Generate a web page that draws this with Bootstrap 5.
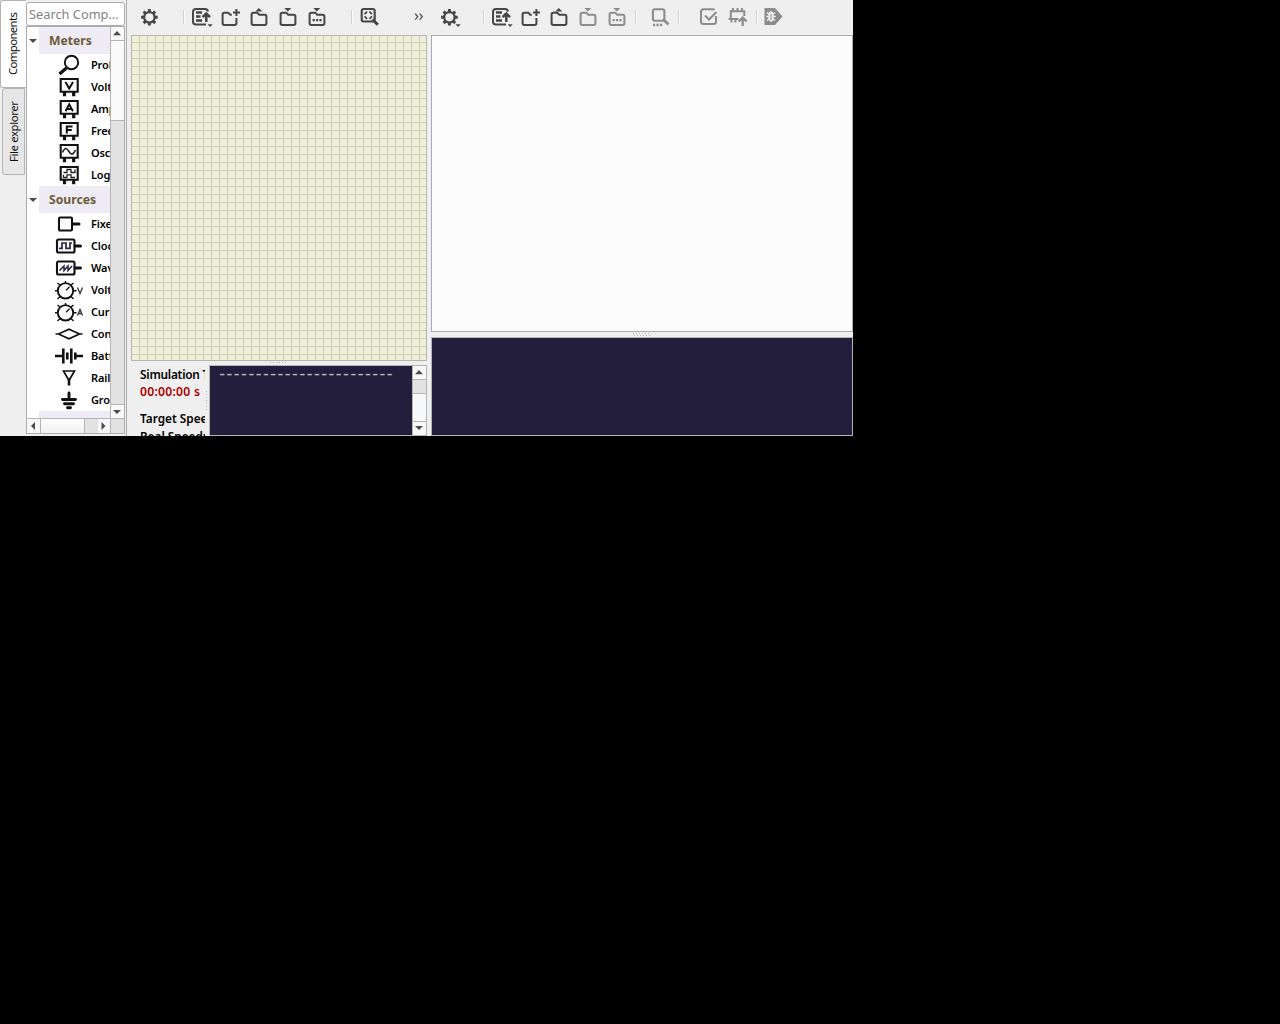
<!DOCTYPE html>
<html lang="en">
<head>
<meta charset="utf-8">
<title>SimulIDE</title>
<link rel="stylesheet" href="https://cdn.jsdelivr.net/npm/bootstrap@5.3.0/dist/css/bootstrap.min.css">
<style>
body{background:#000;font-family:"Noto Sans",sans-serif;font-size:11px;line-height:1.2;color:#111;overflow:hidden}
svg{display:block;flex:none}
.app-window{width:853px;height:436px;background:#efefef}
.side{width:127px;border-right:1px solid #acacac}
.tab-strip{width:26px}
.vtab{writing-mode:vertical-rl;transform:rotate(180deg);font-size:11.4px;white-space:nowrap;border:1px solid #b4b4b4}
.vtab-on{height:88px;width:26px;background:#fff;border-left:0;border-radius:0 3px 3px 0;letter-spacing:-.65px;padding-left:1px}
.vtab-off{height:87px;width:23px;margin-left:2px;background:#e6e6e6;border-radius:0 3px 3px 0;letter-spacing:-.4px}
.side-body{width:99px;padding-top:2px}
.search-box{height:24px;border:1px solid #acacac;border-radius:3px;background:#fff;color:#838383;font-size:12.8px;padding:1px 2px 0}
.tree-frame{height:408px;border:1px solid #acacac;background:#fff}
.tree-main{height:391px}
.tree-list{width:83px}
.group-row{height:27px}
.group-arrow{width:12px}
.group-name{background:#efebf5;color:#6b5b3c;font-weight:700;font-size:12.2px;padding:2px 0 0 10px}
.part-row{height:22px;padding-left:27px;font-weight:600;gap:7px;white-space:nowrap;color:#000;letter-spacing:-.15px}
.track{background:#e2e2e2;border-left:1px solid #b4b4b4;width:14px}
.sb-btn{height:13px;background:#f8f8f8}
.thumb-v{height:81px;background:#fafafa;border:solid #b4b4b4;border-width:1px 0}
.thumb-s{background:#e2e2e2;height:15px;border:solid #b4b4b4;border-width:1px 0}
.sb-end{border-top:1px solid #b4b4b4;height:14px}
.hbar{height:15px;border-top:1px solid #b4b4b4;background:#e2e2e2}
.hb-l{width:13px;background:#f8f8f8}
.hb-t{width:45px;background:linear-gradient(#fff,#f0f0f0);border:solid #b4b4b4;border-width:0 1px}
.circuit-side{width:300px;padding-left:4px}
.tool-bar{height:35px;padding-top:5px;color:#464646}
.tb-left{padding-left:4px}
.tb-right{padding-left:4px}
.tb-sep{width:2px;height:14px;margin-top:5px;border-left:1px solid #d2d2d2;background:#fafafa}
.dim{color:#8c8c8c}
.sp19{margin-left:19px}
.ml3{margin-left:3px}
.more-btn{font-size:16px;line-height:20px;margin-left:30px;letter-spacing:-.5px}
.grid-sheet{height:326px;width:296px;border:1px solid #b4b4b4;background-color:#f0f0d8;
background-image:linear-gradient(90deg,#cfd0b9 1px,transparent 1px),linear-gradient(#cfd0b9 1px,transparent 1px);background-size:8px 8px;background-position:7px 0,0 6px}
.grip-h{height:4px}
.info-pane{height:71px;width:296px}
.sim-info{width:74px;padding-left:9px;font-weight:600;font-size:11.8px;white-space:nowrap;line-height:18px;color:#000}
.sim-title{letter-spacing:-.22px}
.sim-time{color:#a00;font-size:12.2px;letter-spacing:.25px}
.sim-speed{margin-top:8px}
.grip-v{width:4px}
.console{background:#231e3b;border:1px solid #b4b4b4}
.out-text{font-family:"DejaVu Sans Mono",monospace;font-size:17px;letter-spacing:-2.95px;color:#b9b8b6;padding-left:7px;line-height:14px}
.editor-side{width:422px;margin-left:4px}
.edit-area{height:297px;background:#fbfbfb;border:1px solid #acacac}
.console-out{height:99px;margin-top:1px}
</style>
<script src="https://cdn.jsdelivr.net/npm/bootstrap@5.3.0/dist/js/bootstrap.bundle.min.js"></script>
</head>
<body>
<svg width="0" height="0" class="position-absolute">
<defs>
<g id="gear" fill="none" stroke="currentColor"><circle cx="14.4" cy="12.3" r="5.2" stroke-width="2.2"/><path stroke-width="2.9" d="M14.4 7V4M14.4 17.6v3M9.1 12.300H6.100M19.700 12.300h3M10.700 8.600 8.600 6.500M18.100 8.600l2.100-2.100M10.700 16l-2.100 2.100M18.100 16l2.100 2.100"/></g>
<path id="corner" fill="currentColor" d="M20.600 19.300h5l-2.500 2.600z"/>
<g id="recent" fill="none" stroke="currentColor" stroke-width="2"><path d="M21 6.500Q20.500 4 18 4H9Q6 4 6 7V16.500Q6 19.500 9 19.500H19"/><path stroke-width="2.300" d="M9 7.500h6M9 11.500h4.500M9 15.500h6"/><path stroke-width="2.500" d="M19.300 17V9M15.600 12.200l3.700-3.700L23 12.200"/></g>
<path id="fold" fill="none" stroke="currentColor" stroke-width="2" stroke-linejoin="round" d="M6.600 9.500Q6.600 7.800 8.300 7.800H12.500L14.300 9.800H19.700Q21.400 9.800 21.400 11.500V18.300Q21.400 20 19.700 20H8.300Q6.600 20 6.600 18.300Z"/>
<path id="foldplus" fill="none" stroke="currentColor" stroke-width="2" stroke-linejoin="round" d="M15.800 9.800H14.300L12.500 7.800H8.300Q6.600 7.800 6.600 9.500V18.300Q6.600 20 8.300 20H18.700Q20.400 20 20.400 18.300V13M20.400 4V11M17 7.500H24"/>
<path id="up" fill="currentColor" d="M10.300 6.600 13.800 3l3.500 3.600z"/>
<path id="down" fill="currentColor" d="M10.300 3h7L13.800 6.500z"/>
<path id="dots" fill="currentColor" d="M9.600 14h2.200v2.200H9.600zM13 14h2.200v2.200H13zM16.400 14h2.200v2.200h-2.200z"/>
<g id="meter" fill="none" stroke="#111" stroke-width="2.100"><path d="M6.700 3h17v12.800h-17z"/><path stroke-width="3.200" d="M10.500 16v4.300M19.700 16v4.300"/></g>
<g id="knob" fill="none" stroke="#111" stroke-width="1.900"><circle cx="11.500" cy="11.800" r="7.700"/><path stroke-width="1.400" d="M11.500 2V4M1 11.800h3M19 11.800h3.500M3.500 4l2.500 2M19.500 4l-2.500 2M3.500 20l2.500-2.500M19.500 20l-2.500-2.500"/><path stroke-width="1.300" d="M12 11.300l3.500-3.500"/></g>
<path id="tri-up" fill="#4a4a4a" d="M3 9.200 7 5l4 4.200z"/>
<path id="tri-dn" fill="#4a4a4a" d="M3 5h8L7 9z"/>
</defs>
</svg>
<div class="app-window d-flex overflow-hidden">
 <aside class="side d-flex flex-shrink-0">
  <div class="tab-strip flex-shrink-0">
   <div class="vtab vtab-on d-flex align-items-center justify-content-center">Components</div>
   <div class="vtab vtab-off d-flex align-items-center justify-content-center">File explorer</div>
  </div>
  <div class="side-body flex-shrink-0">
   <div class="search-box d-flex align-items-center text-nowrap">Search Comp…</div>
   <div class="tree-frame">
    <div class="tree-main d-flex">
     <div class="tree-list overflow-hidden">
      <div class="group-row d-flex"><div class="group-arrow d-flex align-items-center"><svg width="12" height="14"><path fill="#4a4a4a" d="M2 5h8L6 9z"/></svg></div><div class="group-name flex-grow-1 d-flex align-items-center">Meters</div></div>
      <div class="part-row d-flex align-items-center"><svg width="30" height="22"><g fill="none" stroke="#111"><circle cx="17.500" cy="8.500" r="6.700" stroke-width="1.900"/><path stroke-width="3.200" d="M12.500 14 5.500 20"/></g></svg>Probe</div>
      <div class="part-row d-flex align-items-center"><svg width="30" height="22"><use href="#meter"/><path fill="none" stroke="#111" stroke-width="2" d="M11.500 6l3.700 6.500L19 6"/></svg>Voltmeter</div>
      <div class="part-row d-flex align-items-center"><svg width="30" height="22"><use href="#meter"/><path fill="none" stroke="#111" stroke-width="1.900" d="M11.500 13.300l3.700-7 3.700 7M12.700 11h5"/></svg>Ampmeter</div>
      <div class="part-row d-flex align-items-center"><svg width="30" height="22"><use href="#meter"/><path fill="none" stroke="#111" stroke-width="2" d="M12.800 13.400V6.400h5.700M12.800 9.900h5"/></svg>Freq. Meter</div>
      <div class="part-row d-flex align-items-center"><svg width="30" height="22"><use href="#meter"/><path fill="none" stroke="#222" stroke-width="1.600" d="M8.500 10.500C11 4.500 13 6 15 9.500S19 13.500 21.500 8"/></svg>Oscope</div>
      <div class="part-row d-flex align-items-center"><svg width="30" height="22"><use href="#meter"/><path fill="none" stroke="#222" stroke-width="1.300" d="M9.500 8.500h3.500V5.500h4v3h4V5.500M9.500 10.800v2.700h3.500v-2.700h4v2.700h4"/></svg>Logic Analyzer</div>
      <div class="group-row d-flex"><div class="group-arrow d-flex align-items-center"><svg width="12" height="14"><path fill="#4a4a4a" d="M2 5h8L6 9z"/></svg></div><div class="group-name flex-grow-1 d-flex align-items-center">Sources</div></div>
      <div class="part-row d-flex align-items-center"><svg width="30" height="22"><rect x="5" y="4.500" width="13" height="13" rx="1" fill="none" stroke="#111" stroke-width="2.100"/><path stroke="#111" stroke-width="3" stroke-linecap="round" d="M19 11h6"/></svg>Fixed Voltage</div>
      <div class="part-row d-flex align-items-center"><svg width="30" height="22"><rect x="3" y="4.500" width="17.500" height="13" rx="1.500" fill="none" stroke="#111" stroke-width="2.100"/><path stroke="#111" stroke-width="3" stroke-linecap="round" d="M21 11h5.500"/><path fill="none" stroke="#27224a" stroke-width="1.700" d="M5 13.300h3V8h4v5.300h4V8h2"/></svg>Clock</div>
      <div class="part-row d-flex align-items-center"><svg width="30" height="22"><rect x="3" y="4.500" width="17.500" height="13" rx="1.500" fill="none" stroke="#111" stroke-width="2.100"/><path stroke="#111" stroke-width="3" stroke-linecap="round" d="M21 11h5.500"/><path fill="none" stroke="#27224a" stroke-width="1.500" d="M5.500 13.500l4.500-4.500v4.500l4-4.500v4.500l4-4.500"/></svg>Wave Gen.</div>
      <div class="part-row d-flex align-items-center"><svg width="30" height="22"><use href="#knob"/><path fill="none" stroke="#333" stroke-width="1.300" d="M23.500 8.500l2.500 6 2.500-6"/></svg>Voltage Source</div>
      <div class="part-row d-flex align-items-center"><svg width="30" height="22"><use href="#knob"/><path fill="none" stroke="#333" stroke-width="1.300" d="M23.500 14.500l2.500-6 2.500 6M24.500 12.500h3"/></svg>Current Source</div>
      <div class="part-row d-flex align-items-center"><svg width="30" height="22"><path fill="none" stroke="#111" stroke-width="1.700" d="M1.500 11h3l10.500-4.800 10.500 4.800-10.500 4.800-10.500-4.800M25.500 11h3"/></svg>Controlled Source</div>
      <div class="part-row d-flex align-items-center"><svg width="30" height="22"><path fill="none" stroke="#111" stroke-width="2.600" d="M1 11h8M21 11h8M9.300 3.500v15M13.300 7.500v7M17.300 3.500v15M21.300 7.500v7"/></svg>Battery</div>
      <div class="part-row d-flex align-items-center"><svg width="30" height="22"><path fill="none" stroke="#111" stroke-width="1.700" d="M9.500 4h11L15 13.500z"/><path stroke="#111" stroke-width="2.600" d="M15 11.500v7"/></svg>Rail</div>
      <div class="part-row d-flex align-items-center"><svg width="30" height="22"><path fill="none" stroke="#111" stroke-width="2.900" stroke-linecap="round" d="M15 4v6M8.500 10.500h13M10.500 14.700h9M13.500 18.700h3"/></svg>Ground</div>
      <div class="group-row d-flex"><div class="group-arrow"></div><div class="group-name flex-grow-1"></div></div>
     </div>
     <div class="track d-flex flex-column">
      <div class="sb-btn"><svg width="13" height="13"><use href="#tri-up" x="-1" y="-1"/></svg></div>
      <div class="thumb-v"></div>
      <div class="sb-btn sb-end mt-auto"><svg width="13" height="13"><use href="#tri-dn" x="-1"/></svg></div>
     </div>
    </div>
    <div class="hbar d-flex"><div class="hb-l"><svg width="13" height="14"><path fill="#4a4a4a" d="M8 3v8L4 7z"/></svg></div><div class="hb-t"></div><div class="hb-l ms-auto border-start"><svg width="12" height="14"><path fill="#4a4a4a" d="M3.500 3v8l4-4z"/></svg></div><div class="track"></div></div>
   </div>
  </div>
 </aside>

 <main class="circuit-side flex-shrink-0">
  <div class="tool-bar tb-left d-flex">
   <svg width="29" height="24"><use href="#gear"/></svg>
   <div class="tb-sep sp19"></div>
   <svg width="31" height="24" viewBox="-2 0 31 24"><use href="#recent"/><use href="#corner"/></svg>
   <svg width="29" height="24"><use href="#foldplus"/></svg>
   <svg width="29" height="24"><use href="#fold"/><use href="#up"/></svg>
   <svg width="29" height="24"><use href="#fold"/><use href="#down"/></svg>
   <svg width="29" height="24"><use href="#fold"/><use href="#down"/><use href="#dots"/></svg>
   <div class="tb-sep sp19"></div>
   <svg width="31" height="24" viewBox="-2 0 31 24"><g fill="none" stroke="currentColor"><rect x="6.700" y="4" width="13" height="12.500" rx="2" stroke-width="2.100"/><path stroke-width="3" d="M17.500 14.500l5.300 5.300"/><path stroke-width="1.700" d="M9.500 9.200l2.600-2.600M14.400 6.600l2.600 2.600M17 11.300l-2.600 2.600M12.100 13.900l-2.600-2.600"/></g></svg>
   <div class="more-btn">››</div>
  </div>
  <div class="grid-sheet"></div>
  <div class="grip-h d-flex justify-content-center"><svg width="18" height="4"><path stroke="#b5b5b5" stroke-dasharray="1 2" d="M0 1.500h18"/></svg></div>
  <div class="info-pane d-flex">
   <div class="sim-info overflow-hidden"><div class="sim-title overflow-hidden">Simulation Time:</div><div class="sim-time">00:00:00 s</div><div class="sim-speed overflow-hidden">Target Speed:</div><div class="overflow-hidden">Real Speed:</div></div>
   <div class="grip-v d-flex align-items-center"><svg width="4" height="20"><path stroke="#b5b5b5" stroke-dasharray="1 2" d="M1.500 0v20"/></svg></div>
   <div class="console flex-grow-1 d-flex">
    <div class="out-text flex-grow-1 text-nowrap">------------------------</div>
    <div class="track d-flex flex-column flex-shrink-0 bg-light"><div class="sb-btn"><svg width="13" height="13"><use href="#tri-up" x="-1" y="-1"/></svg></div><div class="thumb-s"></div><div class="sb-btn sb-end mt-auto"><svg width="13" height="13"><use href="#tri-dn" x="-1" y="-1"/></svg></div></div>
   </div>
  </div>
 </main>

 <section class="editor-side flex-shrink-0">
  <div class="tool-bar tb-right d-flex">
   <svg width="29" height="24"><use href="#gear"/><use href="#corner"/></svg>
   <div class="tb-sep sp19"></div>
   <svg width="31" height="24" viewBox="-2 0 31 24"><use href="#recent"/><use href="#corner"/></svg>
   <svg width="29" height="24"><use href="#foldplus"/></svg>
   <svg width="29" height="24"><use href="#fold"/><use href="#up"/></svg>
   <svg class="dim" width="29" height="24"><use href="#fold"/><use href="#down"/></svg>
   <svg class="dim" width="29" height="24"><use href="#fold"/><use href="#down"/><use href="#dots"/></svg>
   <div class="tb-sep ml3"></div>
   <svg class="dim" width="38" height="24" viewBox="-9 0 38 24"><g fill="none" stroke="currentColor"><rect x="6.900" y="4.200" width="11.500" height="11.500" rx="2" stroke-width="2.100"/><path stroke-width="2.700" d="M17 14l5.500 5.500M7 20h2.200M10.500 20h2.200M14 20h2.200"/></g></svg>
   <div class="tb-sep ml3"></div>
   <svg class="dim" width="43" height="24" viewBox="-14 0 43 24"><path fill="none" stroke="currentColor" stroke-width="2" d="M20.500 4.800Q20 4.200 18.500 4.200H9.500Q7 4.200 7 6.700v9.800Q7 19 9.500 19h10q2.500 0 2.500-2.500V11M11 10.500l4 4L22.500 7"/></svg>
   <svg class="dim" width="29" height="24"><g fill="none" stroke="currentColor" stroke-width="2"><path d="M15.500 14H7.800V6.300h13.500V11M5.500 14h2M10 3v3.500M14.500 3v3.500M19 3v3.500M8.500 14v3.500M12.500 14v3.500"/><path stroke-width="2.200" d="M19.700 21v-8M15.800 16.500l3.900-3.900 3.900 3.900"/></g></svg>
   <div class="tb-sep ms-1"></div>
   <svg class="dim" width="30" height="24"><path fill="currentColor" d="M6.500 3H17l7.500 8.500L17 20H6.500z"/><g fill="none" stroke="#efefef" stroke-width="1.500"><path d="M8.300 11.500h9.400M9 7.500l3 2.500M17 7.500L14 10M9 15.500l3-2.500M17 15.500L14 13"/><ellipse cx="13" cy="11.500" rx="1.800" ry="4.500" fill="#efefef"/></g><path stroke="currentColor" d="M13 9v6"/></svg>
  </div>
  <div class="edit-area"></div>
  <div class="grip-h d-flex justify-content-center"><svg width="18" height="5"><path stroke="#b5b5b5" stroke-dasharray="1 2" d="M0 1.500h18M1 3.500h18"/></svg></div>
  <div class="console console-out"></div>
 </section>
</div>
</body>
</html>
